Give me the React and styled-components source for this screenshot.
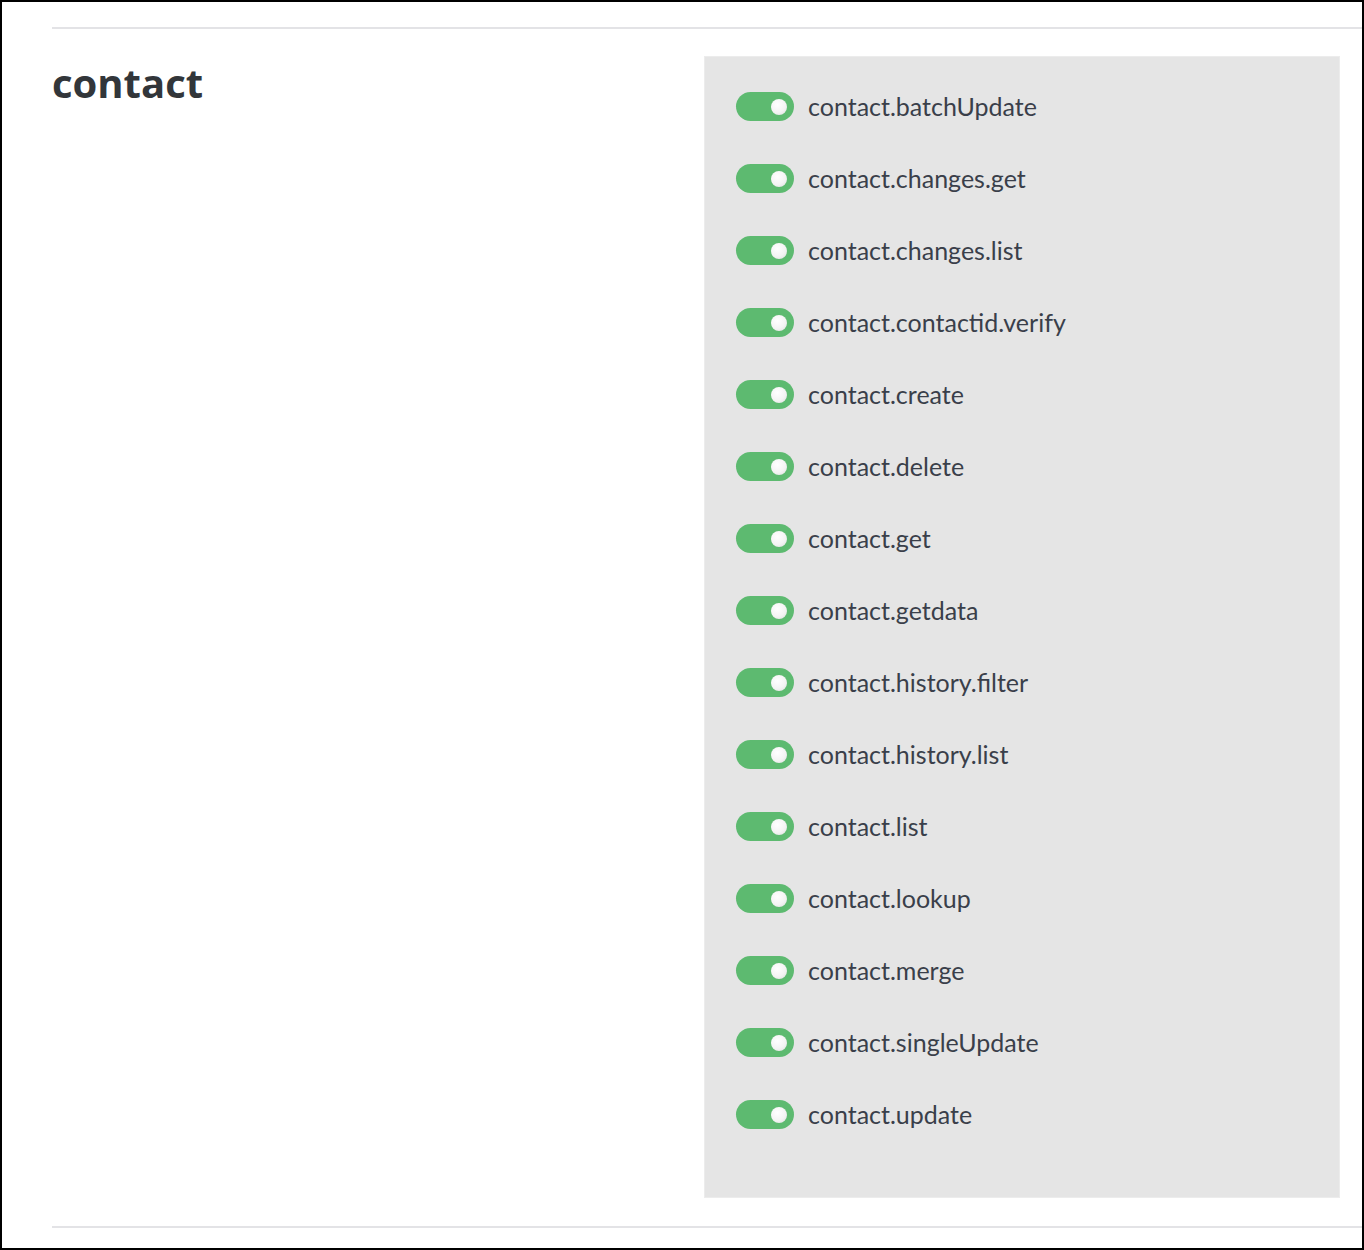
import React from "react";
import styled, { createGlobalStyle } from "styled-components";

const GlobalStyle = createGlobalStyle`
  html, body {
    margin: 0;
    padding: 0;
    background: #ffffff;
  }
  * {
    box-sizing: border-box;
  }
`;

const Frame = styled.div`
  width: 1364px;
  height: 1250px;
  border: 2px solid #000000;
  background: #ffffff;
  padding: 25px 0 0 50px;
  font-family: "Lato", "Open Sans", sans-serif;
`;

const Divider = styled.div`
  height: 2px;
  background: #e3e3e6;
`;

const Section = styled.section`
  display: flex;
  align-items: flex-start;
  padding: 27px 22px 28px 0;
`;

const Heading = styled.h2`
  width: 652px;
  flex-shrink: 0;
  margin: 7px 0 0;
  font-family: "Open Sans", sans-serif;
  font-weight: 700;
  font-size: 40px;
  line-height: 1;
  color: #32363a;
`;

const Panel = styled.div`
  width: 636px;
  height: 1142px;
  background: #e5e5e5;
  border: 1px solid #ececec;
  padding: 13px 0 0 31px;
  display: flex;
  flex-direction: column;
`;

const Row = styled.label`
  display: flex;
  align-items: center;
  gap: 14px;
  height: 72px;
  cursor: pointer;
`;

const Track = styled.span`
  position: relative;
  width: 58px;
  height: 29px;
  border-radius: 15px;
  background: ${(p) => (p.$on ? "#5dba70" : "#b5b5b5")};
  flex-shrink: 0;
`;

const Knob = styled.span`
  position: absolute;
  top: 7px;
  left: ${(p) => (p.$on ? "35px" : "7px")};
  width: 16px;
  height: 16px;
  border-radius: 50%;
  background: radial-gradient(circle at 40% 35%, #ffffff 0%, #f4f4f4 55%, #dcdcdc 100%);
`;

const Label = styled.span`
  font-size: 25px;
  color: #3a3f4a;
`;

const scopes = [
  "contact.batchUpdate",
  "contact.changes.get",
  "contact.changes.list",
  "contact.contactid.verify",
  "contact.create",
  "contact.delete",
  "contact.get",
  "contact.getdata",
  "contact.history.filter",
  "contact.history.list",
  "contact.list",
  "contact.lookup",
  "contact.merge",
  "contact.singleUpdate",
  "contact.update",
];

const Toggle = ({ on }) => (
  <Track $on={on}>
    <Knob $on={on} />
  </Track>
);

export default function App() {
  return (
    <>
      <GlobalStyle />
      <Frame>
        <Divider />
        <Section>
          <Heading>contact</Heading>
          <Panel>
            {scopes.map((s) => (
              <Row key={s}>
                <Toggle on />
                <Label>{s}</Label>
              </Row>
            ))}
          </Panel>
        </Section>
        <Divider />
      </Frame>
    </>
  );
}
